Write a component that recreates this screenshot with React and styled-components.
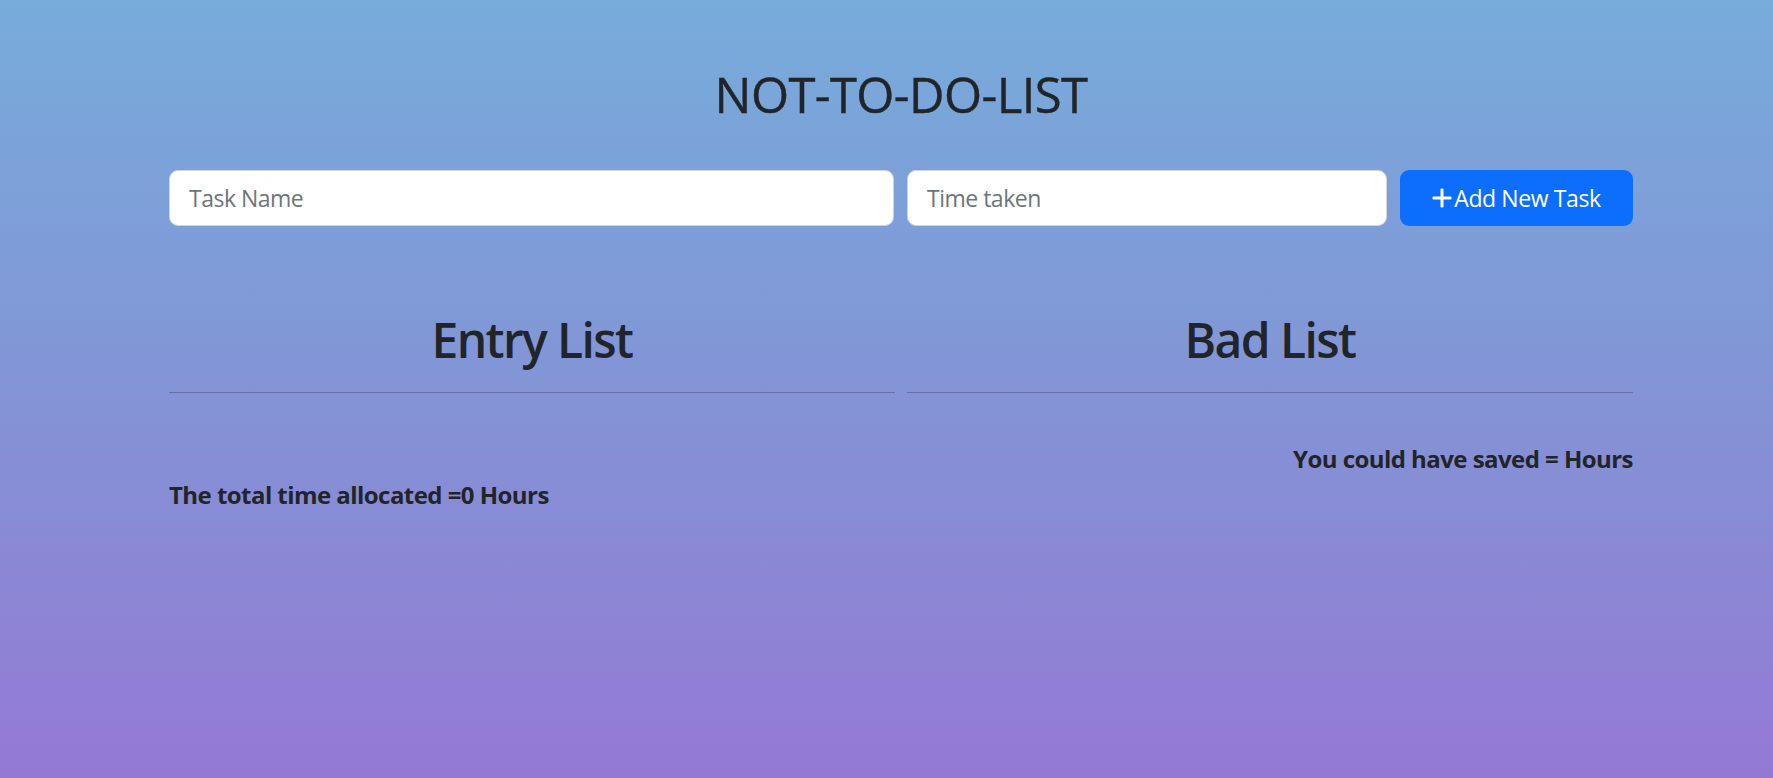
import React from "react";
import styled, { createGlobalStyle } from "styled-components";

const GlobalStyle = createGlobalStyle`
  html, body {
    margin: 0;
    padding: 0;
  }
  body {
    font-family: "Open Sans", "Noto Sans", sans-serif;
    color: #212529;
  }
`;

const Page = styled.div`
  min-height: 100vh;
  background: linear-gradient(to bottom, #77acdb 0%, #8394d6 50%, #9479d4 100%);
  padding-top: 64px;
  box-sizing: border-box;
`;

const Container = styled.main`
  width: 1464px;
  margin-left: 169px;
`;

const Title = styled.h1`
  margin: 0;
  font-size: 49px;
  line-height: 60px;
  font-weight: 400;
  letter-spacing: -0.6px;
  text-align: center;
  -webkit-text-stroke: 0.4px #212529;
`;

const FormRow = styled.form`
  margin-top: 46px;
  display: grid;
  grid-template-columns: 725px 480px 1fr;
  column-gap: 13px;
`;

const Field = styled.input`
  height: 56px;
  box-sizing: border-box;
  padding: 0 19px;
  border: 1px solid #ced4da;
  border-radius: 9px;
  background: #fff;
  font-family: inherit;
  font-size: 23px;
  letter-spacing: -0.5px;
  color: #212529;
  outline: none;

  &::placeholder {
    color: #6c757d;
  }
`;

const AddButton = styled.button`
  height: 56px;
  border: none;
  border-radius: 9px;
  background: #0d6efd;
  color: #fff;
  font-family: inherit;
  font-size: 23px;
  letter-spacing: -0.4px;
  display: flex;
  align-items: center;
  justify-content: center;
  gap: 2px;
  cursor: pointer;
`;

const ListsRow = styled.section`
  margin-top: 84px;
  display: grid;
  grid-template-columns: 1fr 1fr;
  column-gap: 12px;
`;

const ListColumn = styled.div`
  display: flex;
  flex-direction: column;
`;

const ListHeading = styled.h2`
  margin: 0;
  font-size: 48px;
  line-height: 60px;
  font-weight: 600;
  letter-spacing: -1.6px;
  text-align: center;
`;

const Divider = styled.hr`
  margin: 22px 0 0;
  border: 0;
  border-top: 1px solid rgba(33, 37, 41, 0.3);
`;

const Summary = styled.div`
  margin-top: ${(p) => p.$top}px;
  font-size: 24px;
  line-height: 29px;
  font-weight: 700;
  letter-spacing: -0.55px;
  text-align: ${(p) => p.$align || "left"};
`;

const PlusIcon = () => (
  <svg width="20" height="20" viewBox="0 0 20 20" aria-hidden="true">
    <rect x="8.5" y="0.5" width="3" height="19" rx="1" fill="currentColor" />
    <rect x="0.5" y="8.5" width="19" height="3" rx="1" fill="currentColor" />
  </svg>
);

const App = () => {
  const entries = [];
  const badList = [];
  const total = entries.reduce((sum, item) => sum + Number(item.hr), 0);

  return (
    <Page>
      <GlobalStyle />
      <Container>
        <Title>NOT-TO-DO-LIST</Title>

        <FormRow onSubmit={(e) => e.preventDefault()}>
          <Field type="text" placeholder="Task Name" />
          <Field type="number" placeholder="Time taken" />
          <AddButton type="submit">
            <PlusIcon />
            Add New Task
          </AddButton>
        </FormRow>

        <ListsRow>
          <ListColumn>
            <ListHeading>Entry List</ListHeading>
            <Divider />
            <Summary $top={87}>The total time allocated ={total} Hours</Summary>
          </ListColumn>
          <ListColumn>
            <ListHeading>Bad List</ListHeading>
            <Divider />
            <Summary $top={51} $align="right">
              You could have saved = {badList.length ? "" : ""}Hours
            </Summary>
          </ListColumn>
        </ListsRow>
      </Container>
    </Page>
  );
};

export default App;
